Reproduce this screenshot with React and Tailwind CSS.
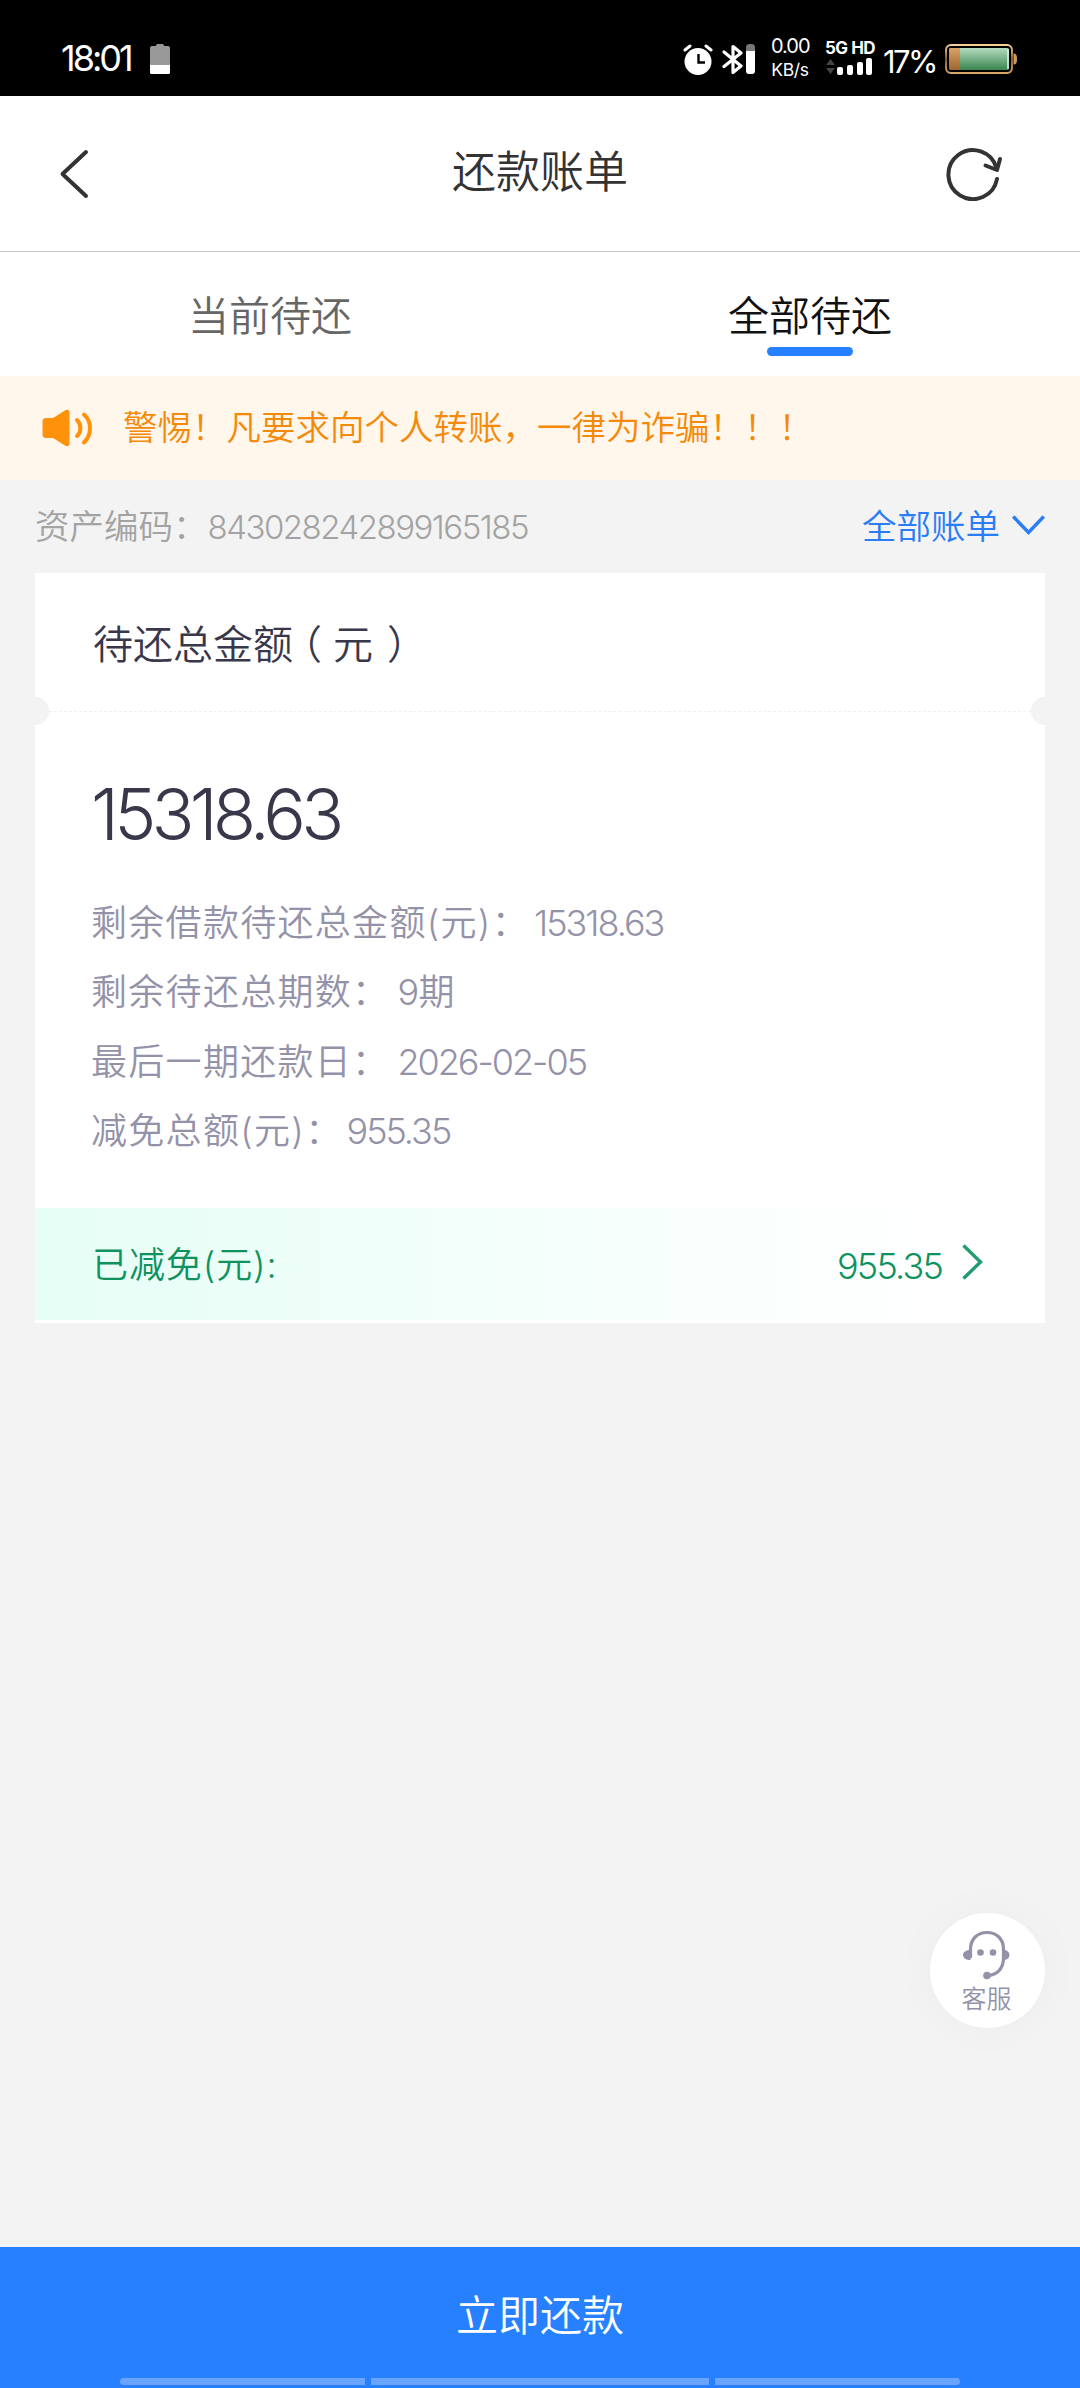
const NOTICE = '警惕！凡要求向个人转账，一律为诈骗！！！'

const DETAILS = [
  { label: '剩余借款待还总金额(元)：', value: '15318.63', spacing: 'ml-[5px] font-light tracking-[-2px]' },
  { label: '剩余待还总期数：', value: '9期', spacing: 'ml-[8px] font-[350] tracking-[-0.5px]' },
  { label: '最后一期还款日：', value: '2026-02-05', spacing: 'ml-[8px] font-light tracking-[-2px]' },
  { label: '减免总额(元)：', value: '955.35', spacing: 'ml-[4px] font-light tracking-[-2px]' },
]

function StatusBar() {
  return (
    <div className="flex h-[96px] items-start bg-black pl-[61px] text-white">
      <span className="mt-[37px] w-[74px] text-[36px] leading-[42px] font-normal tracking-[-3px] whitespace-nowrap">18:01</span>
      <svg className="mt-[44px] ml-[15px] h-[30px] w-[20px]" viewBox="0 0 20 30">
        <path d="M0 4a2 2 0 0 1 2-2h4V1.500a1.500 1.500 0 0 1 1.500-1.500h5a1.500 1.500 0 0 1 1.500 1.500V2h4a2 2 0 0 1 2 2v17H0z" fill="#999" />
        <path d="M0 21h20v7.500a1.500 1.500 0 0 1-1.500 1.500h-17A1.500 1.500 0 0 1 0 28.500z" fill="#fff" />
      </svg>
      <div className="ml-auto flex items-start">
        <svg className="mt-[44px] h-[31px] w-[30px]" viewBox="0 0 30 31">
          <circle cx="15" cy="17.500" r="13.500" fill="#fff" />
          <path d="M2 6l5-4M28 6l-5-4" stroke="#fff" strokeWidth="3" strokeLinecap="round" />
          <path d="M15.500 10v8.500H22" fill="none" stroke="#000" strokeWidth="2.400" />
        </svg>
        <svg className="mt-[44px] ml-[9px] h-[31px] w-[34px]" viewBox="0 0 34 31">
          <path d="M2 8l17 14-8 6.500V2.500L19 9 2 22.500" fill="none" stroke="#fff" strokeWidth="3.200" strokeLinejoin="round" strokeLinecap="round" />
          <rect x="24" y="0" width="9" height="30" rx="3.500" fill="#777" />
          <path d="M24 7h9v19.500a3.500 3.500 0 0 1-3.500 3.500h-2a3.500 3.500 0 0 1-3.500-3.500z" fill="#fff" />
        </svg>
        <div className="mt-[34px] ml-[15px] w-[38px] text-center text-[20px] leading-[24px] tracking-[-1px] whitespace-nowrap">
          <p>0.00</p>
          <p className="text-[17.500px] tracking-[-0.3px]">KB/s</p>
        </div>
        <div className="mt-[38px] ml-[16px] w-[48px]">
          <p className="text-[17px] leading-[20px] font-bold whitespace-nowrap tracking-[-0.5px]">5G HD</p>
          <svg className="h-[18px] w-[48px]" viewBox="0 0 48 18">
            <path d="M1 7l4.500-6L10 7zM1 10h9l-4.500 6z" fill="#444" />
            <rect x="12" y="9" width="6" height="8" rx="2" fill="#fff" />
            <rect x="22" y="7" width="6" height="10" rx="2" fill="#fff" />
            <rect x="32" y="4" width="6" height="13" rx="2" fill="#fff" />
            <rect x="41" y="0" width="6" height="17" rx="2" fill="#fff" />
          </svg>
        </div>
        <span className="mt-[44px] ml-[10px] w-[54px] text-[31px] leading-[36px] tracking-[-2.6px] whitespace-nowrap">17%</span>
        <svg className="mt-[44px] mr-[62px] ml-[8px] h-[30px] w-[73px]" viewBox="0 0 73 30">
          <defs>
            <linearGradient id="shell" x1="0" y1="0" x2="0" y2="1">
              <stop offset="0" stopColor="#f4cf9a" />
              <stop offset="0.500" stopColor="#8a5a2a" />
              <stop offset="1" stopColor="#d9a869" />
            </linearGradient>
            <linearGradient id="charge" x1="0" y1="0" x2="0" y2="1">
              <stop offset="0" stopColor="#b4dcbf" />
              <stop offset="1" stopColor="#3a8450" />
            </linearGradient>
            <linearGradient id="low" x1="0" y1="0" x2="0" y2="1">
              <stop offset="0" stopColor="#d9a06a" />
              <stop offset="1" stopColor="#a0662f" />
            </linearGradient>
          </defs>
          <rect x="1" y="1" width="66" height="28" rx="5" fill="#000" stroke="url(#shell)" strokeWidth="2" />
          <rect x="4" y="4" width="60" height="22" rx="2" fill="url(#charge)" />
          <path d="M4 6a2 2 0 0 1 2-2h9v22H6a2 2 0 0 1-2-2z" fill="url(#low)" />
          <path d="M63 5v20" stroke="#e6f5e9" strokeWidth="1.500" />
          <path d="M68.500 9.500c2.500 0 3.500 1.500 3.500 5.500s-1 5.500-3.500 5.500z" fill="#c99c62" />
        </svg>
      </div>
    </div>
  )
}

function Header() {
  return (
    <header className="flex h-[156px] items-center justify-between border-b border-[#c4c6c8] bg-white pr-[76px] pl-[58px]">
      <svg className="h-[52px] w-[60px]" viewBox="0 0 60 52" fill="none" stroke="#333" strokeWidth="4" strokeLinecap="round" strokeLinejoin="round">
        <path d="M28 4L4.500 26 28 48" />
      </svg>
      <h1 className="mb-[4px] ml-[18px] text-[44px] font-[350] text-[#333]">还款账单</h1>
      <svg className="h-[54px] w-[60px]" viewBox="0 0 60 54" fill="none" stroke="#333" strokeWidth="4" strokeLinecap="round" strokeLinejoin="round">
        <path d="M53 32a24.500 24.500 0 1 1-.5-11" />
        <path d="M41.500 18.500L53 23l3-11" />
      </svg>
    </header>
  )
}

function Tabs() {
  return (
    <div className="grid h-[124px] grid-cols-2 bg-white text-[41px] leading-[60px] font-[350]">
      <div className="flex flex-col items-center pt-[34px] text-[#666]">当前待还</div>
      <div className="flex flex-col items-center pt-[34px] text-[#111]">
        全部待还
        <span className="mt-[1px] h-[9px] w-[86px] rounded-full bg-[#2680ff]" />
      </div>
    </div>
  )
}

function Notice() {
  return (
    <div className="flex h-[104px] items-center bg-[#fff7ec] pl-[42px] text-[#f58a0a]">
      <svg className="h-[38px] w-[52px]" viewBox="0 0 52 38">
        <path d="M4 9h7L23 1.500c2.500-1.500 4.500-.5 4.500 2v31c0 2.500-2 3.500-4.500 2L11 29H4a3.500 3.500 0 0 1-3.500-3.500v-13A3.500 3.500 0 0 1 4 9z" fill="#ff920a" />
        <path d="M35 11c4.500 4 4.500 12 0 16M42 5.500c8 7 8 20 0 28" fill="none" stroke="#ff920a" strokeWidth="4" strokeLinecap="round" />
      </svg>
      <p className="ml-[29px] text-[34.500px] font-[350] whitespace-nowrap">{NOTICE}</p>
    </div>
  )
}

function BillCard() {
  return (
    <section className="relative mx-[35px] bg-white pb-[3px]">
      <div className="flex h-[138px] items-center pt-[6px] pl-[58px] text-[40px] font-[350] text-[#38384a]">
        <span>待还总金额</span>
        <span className="mr-[11px] ml-[9px] [font-feature-settings:'halt']">（</span>
        <span>元</span>
        <span className="ml-[14px] [font-feature-settings:'halt']">）</span>
      </div>
      <div className="mx-[14px] border-t border-dashed border-[#f0f0f0]" />
      <span className="absolute top-[124px] left-[-14px] size-[28px] rounded-full bg-[#f3f3f3]" />
      <span className="absolute top-[124px] right-[-14px] size-[28px] rounded-full bg-[#f3f3f3]" />

      <div className="h-[496px] px-[56px] pt-[60px]">
        <p className="text-[71px] leading-[84px] font-light tracking-[-4.800px] text-[#38384a]">15318.63</p>
        <div className="mt-[32px] text-[36px] text-[#9492a8]">
          {DETAILS.map(d => (
            <div key={d.label} className="flex h-[69.500px] items-center whitespace-nowrap">
              <span className="font-[350] tracking-[1.3px]">{d.label}</span>
              <span className={d.spacing}>{d.value}</span>
            </div>
          ))}
        </div>
      </div>

      <div className="flex h-[112px] items-center bg-linear-to-r from-[#e6fef6] to-white to-90% pr-[62px] pl-[57px] text-[36px] font-[350] text-[#10925f]">
        <span className="pt-[2px] tracking-[0.9px]">已减免(元):</span>
        <span className="ml-auto pt-[4px] font-light tracking-[-1.800px]">955.35</span>
        <svg className="mb-[5px] ml-[20px] h-[36px] w-[21px]" viewBox="0 0 21 36" fill="none" stroke="#229c6e" strokeWidth="3.400">
          <path d="M1.500 1.500L18.500 18 1.500 34.500" />
        </svg>
      </div>
    </section>
  )
}

function ServiceButton() {
  return (
    <button className="absolute top-[1913px] right-[35px] flex size-[115px] flex-col items-center rounded-full bg-white pt-[17px] text-[#9492a8] shadow-[0_0_50px_rgba(0,0,0,0.03)]">
      <svg className="mr-[3px] h-[50px] w-[48px]" viewBox="0 0 48 50">
        <path d="M8.500 28V19C8.500 9 15.500 2.500 25 2.500S41.500 9 41.500 19v9c0 10-6 17-16 17.500" fill="none" stroke="currentColor" strokeWidth="3.200" />
        <path d="M8.500 20v10C4 30 1 28 1 25s3-5 7.500-5zM41 20v10c4 0 6.500-2 6.500-5S45 20 41 20z" fill="currentColor" />
        <circle cx="18.500" cy="22.500" r="3.300" fill="currentColor" />
        <circle cx="31" cy="22.500" r="3.300" fill="currentColor" />
        <circle cx="25" cy="45.500" r="3.800" fill="currentColor" />
      </svg>
      <span className="mt-[3px] mr-[2px] text-[25px] leading-[32px] font-[350]">客服</span>
    </button>
  )
}

export default function App() {
  return (
    <div className="relative flex h-[2388px] w-[1080px] flex-col overflow-hidden bg-[#f3f3f3] font-['Inter','Noto_Sans_CJK_SC',sans-serif]">
      <StatusBar />
      <Header />
      <Tabs />
      <Notice />
      <div className="flex h-[93px] items-center px-[35px] text-[34.500px] font-[350] text-[#a3a3a3]">
        <span>资产编码：</span>
        <span className="pt-[2px] text-[33px] font-light tracking-[-1.5px]">843028242899165185</span>
        <span className="ml-auto text-[#2a7df5]">全部账单</span>
        <svg className="mb-[4px] ml-[12px] h-[20px] w-[33px]" viewBox="0 0 33 20" fill="none" stroke="#2a7df5" strokeWidth="3.400">
          <path d="M1.200 1.500L16.500 17.500 31.800 1.500" />
        </svg>
      </div>
      <BillCard />
      <ServiceButton />

      <button className="mt-auto flex h-[141px] flex-col items-center bg-[#2680ff] text-white">
        <span className="mt-[39px] text-[42px] leading-[60px] font-[350]">立即还款</span>
        <span className="mt-auto mb-[3px] flex gap-[6px]">
          <span className="h-[7px] w-[245px] rounded-l-full bg-[#69a4ff]" />
          <span className="h-[7px] w-[338px] bg-[#69a4ff]" />
          <span className="h-[7px] w-[245px] rounded-r-full bg-[#69a4ff]" />
        </span>
      </button>
    </div>
  )
}
